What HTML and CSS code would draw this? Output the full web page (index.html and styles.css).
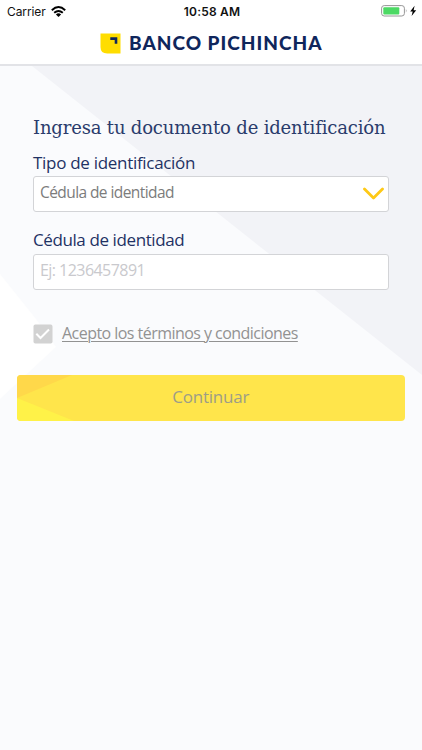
FILE: index.html
```
<!DOCTYPE html>
<html lang="es">
<head>
<meta charset="utf-8">
<title>Banco Pichincha</title>
<link rel="stylesheet" href="styles.css">
</head>
<body>
<header class="header">
  <div class="status">
    <div class="status-side"><span class="carrier">Carrier</span>
      <svg class="wifi" width="15" height="11" viewBox="0 0 15 11" fill="none" stroke="#000" stroke-width="1.9"><path d="M.8 4.2Q7.5-2 14.2 4.2M3.2 6.8Q7.5 3 11.8 6.8"/><path fill="#000" stroke="none" d="M4.9 8.4Q7.5 6.3 10.1 8.4L7.5 11Z"/></svg>
    </div>
    <span class="clock">10:58 AM</span>
    <div class="status-side status-right">
      <svg width="36" height="12" viewBox="0 0 36 12"><rect x=".6" y=".6" width="22.8" height="10.4" rx="2.6" fill="#fff" stroke="#969696"/><rect x="2.3" y="2.2" width="16" height="7.2" rx="1" fill="#4cd964"/><path d="M24.9 4q1.4 1.8 0 3.6z" fill="#969696"/><path d="M33.6.8 29.2 6.5h2.5L30.6 11 35.2 5.2h-2.6z" fill="#000"/></svg>
    </div>
  </div>
  <div class="brand">
    <svg width="21" height="21" viewBox="0 0 21 21"><path d="M.5.5h20v20H7.2Q.5 20.5.5 14z" fill="#ffdd00"/><path d="M10.3 4.2h7v6.5h-2.6V7h-4.4z" fill="#0f265c"/></svg>
    <span class="brand-name">BANCO PICHINCHA</span>
  </div>
</header>
<main class="content">
  <svg class="backdrop" viewBox="0 66 422 684" preserveAspectRatio="none"><path d="M32 66H422V375Z" fill="#f2f3f7"/><path d="M0 274 36 319 56 347 0 399Z" fill="#fff"/></svg>
  <form class="form">
    <h1 class="title">Ingresa tu documento de identificación</h1>
    <label class="label label-type">Tipo de identificación</label>
    <div class="field"><span class="value">Cédula de identidad</span>
      <svg width="22" height="14" viewBox="0 0 22 14" fill="none" stroke="#fec916" stroke-width="2.8" stroke-linecap="round" stroke-linejoin="round"><path d="m2.5 3 9 9 9-9"/></svg>
    </div>
    <label class="label label-id">Cédula de identidad</label>
    <div class="field"><span class="placeholder">Ej: 1236457891</span></div>
    <div class="terms">
      <svg width="20" height="20" viewBox="0 0 20 20"><rect x=".5" y=".6" width="19" height="19" rx="1.8" fill="#d2d2d2"/><path d="m3.3 9.7 4.2 4.3L16 5.5" fill="none" stroke="#fff" stroke-width="2"/></svg>
      <span class="terms-text">Acepto los términos y condiciones</span>
    </div>
  </form>
  <div class="button">
    <svg class="facets" width="57" height="46" viewBox="0 0 57 46"><path d="M0 0H55L0 23Z" fill="#ffd84a"/><path d="M0 23 57 46H0Z" fill="#fff248"/></svg>
    <span class="button-text">Continuar</span>
  </div>
</main>
</body>
</html>
```

FILE: styles.css
```
* { box-sizing: border-box; }
body {
  margin: 0;
  width: 422px;
  height: 750px;
  overflow: hidden;
  background: #fafbfd;
  font-family: "Open Sans", sans-serif;
  white-space: nowrap;
}
.header {
  height: 66px;
  background: #fff;
  border-bottom: 2px solid #e2e3e7;
}
.status {
  height: 22px;
  padding: 0 5px 0 7px;
  display: flex;
  align-items: center;
  font-family: Inter, sans-serif;
  font-size: 12px;
  color: #111;
}
.status-side { flex: 1; display: flex; align-items: center; gap: 5px; }
.status-right { justify-content: flex-end; }
.carrier { letter-spacing: -0.1px; }
.clock { font-weight: 600; letter-spacing: 0.2px; }
.brand {
  height: 42px;
  display: flex;
  align-items: center;
  justify-content: center;
  gap: 8.5px;
}
.brand-name {
  font: 900 19px/24px Lato, sans-serif;
  letter-spacing: 1px;
  color: #0f265c;
}
.content { position: relative; height: 684px; padding: 49px 17px 0 16px; }
.backdrop { position: absolute; inset: 0; width: 100%; height: 100%; }
.form { position: relative; padding: 0 16px 0 17px; }
.title {
  margin: 0;
  font: 400 18px/26px "DejaVu Serif", serif;
  letter-spacing: -0.17px;
  color: #2a3c6c;
}
.label {
  display: block;
  font-size: 17px;
  line-height: 24px;
  letter-spacing: -0.3px;
  color: #1f3264;
}
.label-type { margin: 10px 0 1px; }
.label-id { margin: 16px 0 2px; letter-spacing: -0.4px; }
.field {
  height: 36px;
  padding: 0 4px 2px 6px;
  border: 1px solid #d3d4d7;
  border-radius: 3px;
  background: #fff;
  display: flex;
  align-items: center;
  justify-content: space-between;
}
.value { margin-top: -2px; font-size: 15.5px; line-height: 24px; letter-spacing: -0.58px; color: #7c7c7c; }
.placeholder { margin-top: -2px; font-size: 16px; line-height: 24px; letter-spacing: -0.55px; color: #c9c9cd; }
.terms { margin-top: 32px; height: 24px; display: flex; align-items: center; gap: 9px; }
.terms-text {
  margin-top: -2px;
  font-size: 16px;
  line-height: 20px;
  letter-spacing: -0.54px;
  color: #929292;
  text-decoration: underline;
  text-decoration-thickness: 1px;
  text-underline-offset: 2px;
}
.button {
  position: relative;
  margin: 29px 0 0 0.5px;
  height: 46px;
  border-radius: 4px;
  overflow: hidden;
  background: #ffe54b;
  display: flex;
  align-items: center;
  justify-content: center;
}
.facets { position: absolute; left: 0; top: 0; }
.button-text { margin-top: -4px; font-size: 17px; letter-spacing: -0.2px; color: #9d9d87; }
```
